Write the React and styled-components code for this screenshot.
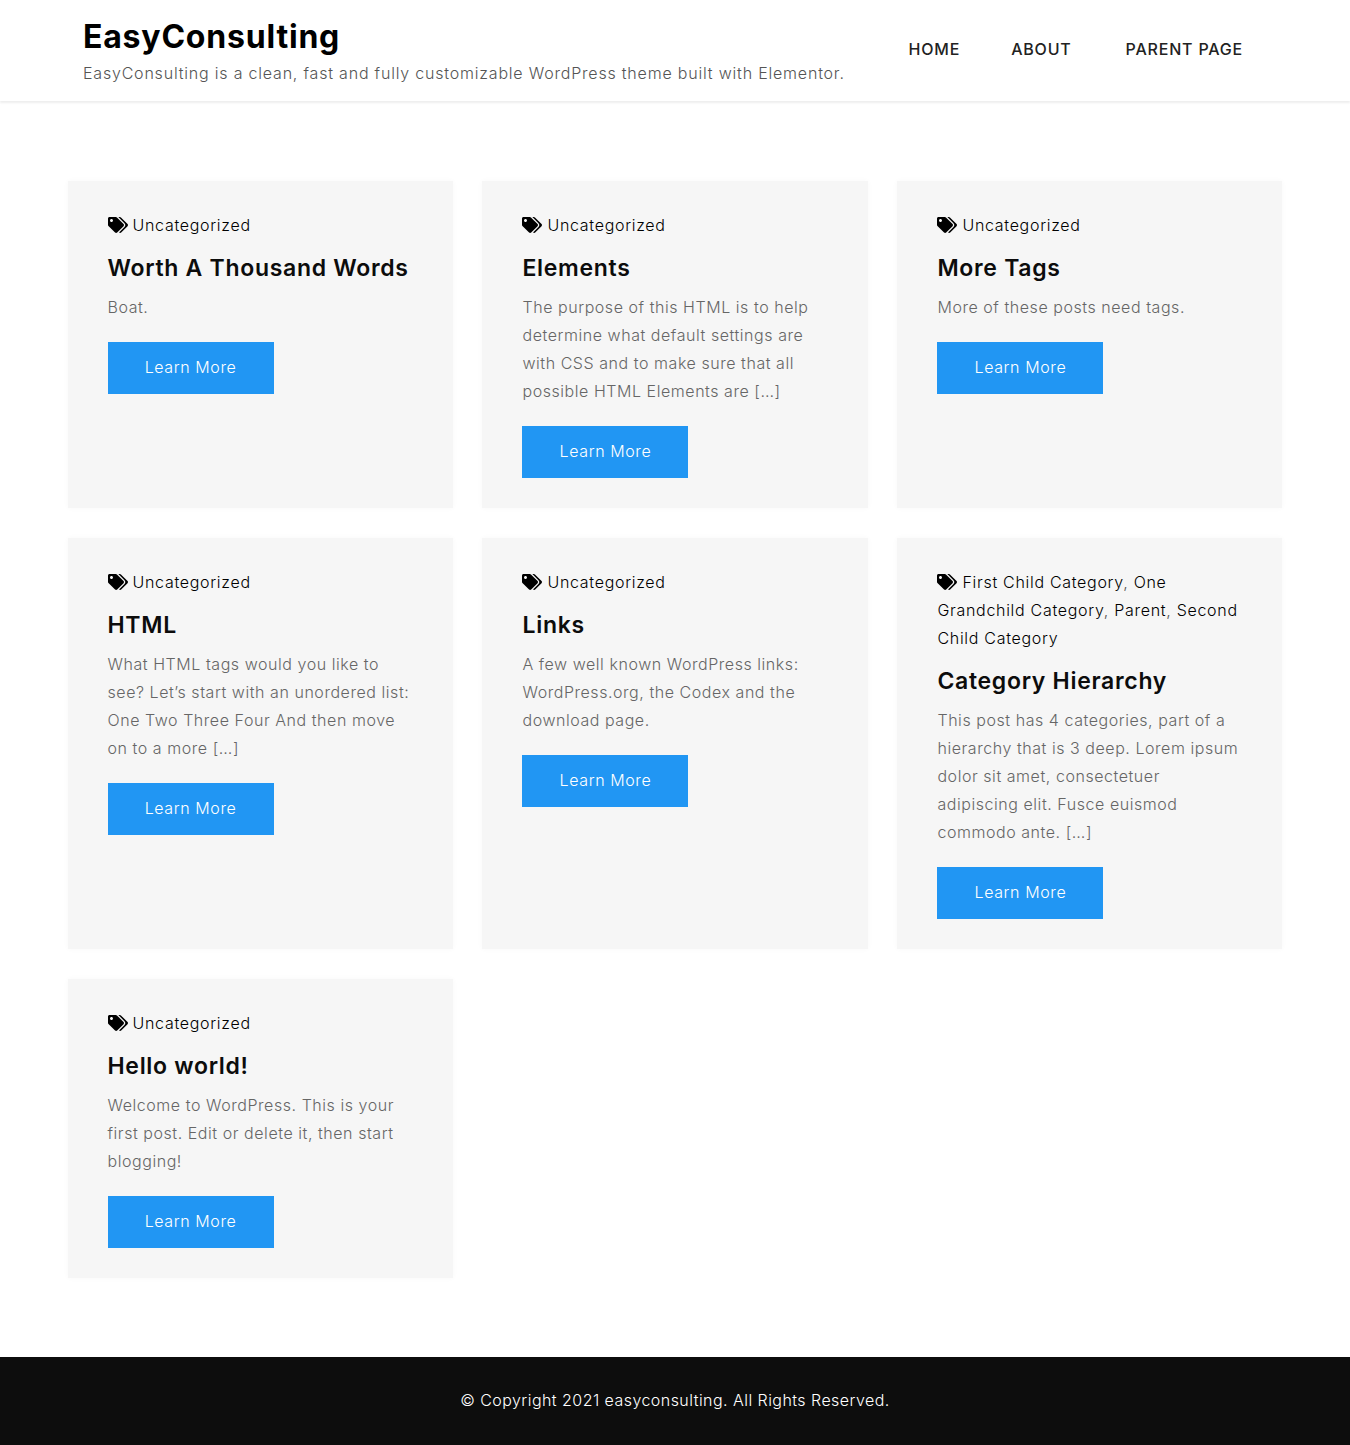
import React from "react";
import styled, { createGlobalStyle } from "styled-components";
import { FaTags } from "react-icons/fa";

const GlobalStyle = createGlobalStyle`
  * {
    box-sizing: border-box;
  }

  body {
    margin: 0;
    background: #fff;
    font-family: "Inter", "Open Sans", sans-serif;
    font-size: 16px;
    line-height: 28px;
  }
`;

// Header
const Header = styled.header`
  display: flex;
  justify-content: space-between;
  align-items: center;
  height: 101px;
  padding: 0 107px 0 83px;
  background: #fff;
  box-shadow: 0 2px 2px rgba(0, 0, 0, 0.07);
`;

const Brand = styled.div`
  display: flex;
  flex-direction: column;
  padding-top: 3px;
`;

const SiteTitle = styled.h1`
  margin: 0;
  font-size: 32px;
  line-height: 40px;
  font-weight: 700;
  letter-spacing: 0.8px;
  color: #000;
`;

const Tagline = styled.p`
  margin: 2px 0 0;
  font-size: 16px;
  line-height: 28px;
  font-weight: 300;
  letter-spacing: 0.8px;
  color: #555;
`;

const Nav = styled.nav`
  display: flex;
  align-items: center;
  padding-bottom: 3px;
`;

const NavLink = styled.a`
  margin-left: ${(p) => p.$gap}px;
  font-size: 16px;
  line-height: 28px;
  font-weight: 500;
  letter-spacing: 0.8px;
  color: #222;
`;

// Posts
const Main = styled.main`
  display: grid;
  grid-template-columns: repeat(3, 1fr);
  gap: 30px 29.9px;
  padding: 80px 67.5px 79px;
`;

const Card = styled.article`
  display: flex;
  flex-direction: column;
  align-items: flex-start;
  padding: 30px 40px;
  background: #f6f6f6;
  box-shadow: 0 0 6px rgba(0, 0, 0, 0.03);
`;

const Meta = styled.div`
  font-size: 16px;
  line-height: 28px;
  font-weight: 300;
  letter-spacing: 0.7px;
  color: #555;
`;

const TagIcon = styled(FaTags)`
  margin-right: 5px;
  font-size: 20px;
  color: #000;
  vertical-align: -4px;
`;

const CategoryLink = styled.a`
  color: #000;
`;

const Title = styled.h3`
  margin: 14px 0 9px;
  font-size: 23px;
  line-height: 31px;
  font-weight: 600;
  letter-spacing: 0.7px;
  color: #0c0c0c;
`;

const Excerpt = styled.p`
  margin: 0 0 21px;
  font-size: 16px;
  line-height: 28px;
  font-weight: 300;
  letter-spacing: 0.55px;
  color: #666;
`;

const Button = styled.a`
  display: flex;
  justify-content: center;
  align-items: center;
  width: 166px;
  height: 52px;
  padding-bottom: 2px;
  background: #2196f3;
  font-size: 16px;
  font-weight: 300;
  letter-spacing: 0.6px;
  color: #fff;
`;

// Footer
const Footer = styled.footer`
  display: flex;
  justify-content: center;
  align-items: center;
  height: 88px;
  padding-bottom: 2px;
  background: #0d0d0d;
  font-size: 16px;
  font-weight: 300;
  letter-spacing: 0.45px;
  color: #fff;
`;

const posts = [
  { id: 1, title: "Worth A Thousand Words", text: "Boat." },
  {
    id: 2,
    title: "Elements",
    text: "The purpose of this HTML is to help determine what default settings are with CSS and to make sure that all possible HTML Elements are […]",
  },
  { id: 3, title: "More Tags", text: "More of these posts need tags." },
  {
    id: 4,
    title: "HTML",
    text: "What HTML tags would you like to see? Let’s start with an unordered list: One Two Three Four And then move on to a more […]",
  },
  {
    id: 5,
    title: "Links",
    text: "A few well known WordPress links: WordPress.org, the Codex and the download page.",
  },
  {
    id: 6,
    title: "Category Hierarchy",
    categories: ["First Child Category", "One Grandchild Category", "Parent", "Second Child Category"],
    text: "This post has 4 categories, part of a hierarchy that is 3 deep. Lorem ipsum dolor sit amet, consectetuer adipiscing elit. Fusce euismod commodo ante. […]",
  },
  {
    id: 7,
    title: "Hello world!",
    text: "Welcome to WordPress. This is your first post. Edit or delete it, then start blogging!",
  },
];

const App = () => {
  return (
    <>
      <GlobalStyle />
      <Header>
        <Brand>
          <SiteTitle>EasyConsulting</SiteTitle>
          <Tagline>EasyConsulting is a clean, fast and fully customizable WordPress theme built with Elementor.</Tagline>
        </Brand>
        <Nav>
          <NavLink $gap={0}>HOME</NavLink>
          <NavLink $gap={51}>ABOUT</NavLink>
          <NavLink $gap={54}>PARENT PAGE</NavLink>
        </Nav>
      </Header>
      <Main>
        {posts.map((post) => {
          const categories = post.categories || ["Uncategorized"];
          return (
            <Card key={post.id}>
              <Meta>
                <TagIcon />
                {categories.map((name, i) => (
                  <React.Fragment key={name}>
                    {i > 0 && ", "}
                    <CategoryLink>{name}</CategoryLink>
                  </React.Fragment>
                ))}
              </Meta>
              <Title>{post.title}</Title>
              <Excerpt>{post.text}</Excerpt>
              <Button>Learn More</Button>
            </Card>
          );
        })}
      </Main>
      <Footer>© Copyright 2021 easyconsulting. All Rights Reserved.</Footer>
    </>
  );
};

export default App;
